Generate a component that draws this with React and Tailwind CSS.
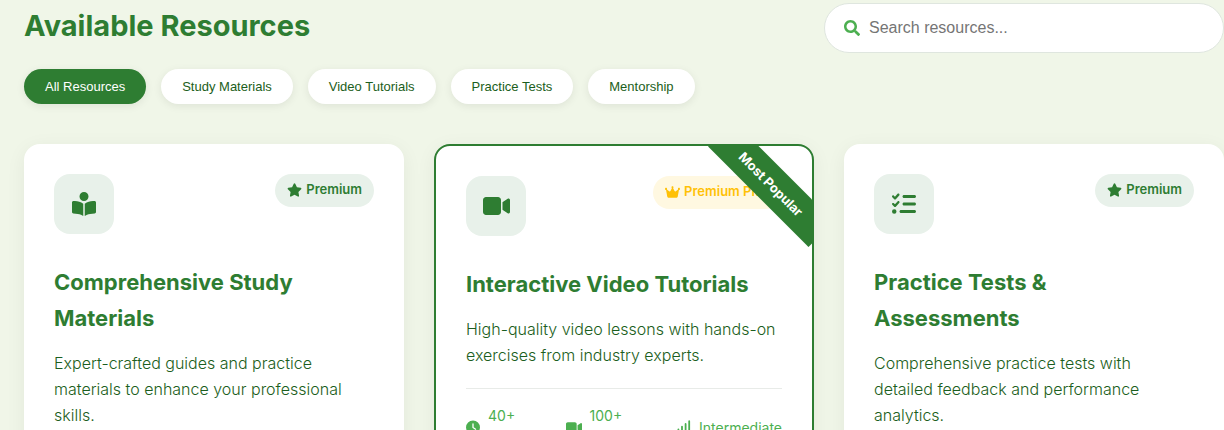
import { FaBookOpenReader, FaVideo, FaListCheck, FaStar, FaCrown, FaClock, FaSignal } from "react-icons/fa6";
import { FaSearch } from "react-icons/fa";

const filters = ["All Resources", "Study Materials", "Video Tutorials", "Practice Tests", "Mentorship"];

const resources = [
  {
    icon: FaBookOpenReader,
    iconWidth: "w-6",
    title: "Comprehensive Study Materials",
    text: "Expert-crafted guides and practice materials to enhance your professional skills.",
    badge: "Premium",
  },
  {
    icon: FaVideo,
    iconWidth: "w-[27px]",
    title: "Interactive Video Tutorials",
    text: "High-quality video lessons with hands-on exercises from industry experts.",
    badge: "Premium Plus",
    popular: true,
    stats: [
      { icon: FaClock, width: "w-[14px]", label: "40+ Hours" },
      { icon: FaVideo, width: "w-4", label: "100+ Videos" },
      { icon: FaSignal, width: "w-[18px]", label: "Intermediate" },
    ],
  },
  {
    icon: FaListCheck,
    iconWidth: "w-6",
    title: "Practice Tests & Assessments",
    text: "Comprehensive practice tests with detailed feedback and performance analytics.",
    badge: "Premium",
  },
];

function Badge({ label, gold }) {
  const Icon = gold ? FaCrown : FaStar;
  return (
    <span
      className={`flex items-center gap-1 rounded-full px-3 pt-[5px] pb-[7px] text-[13px] leading-[21px] font-semibold whitespace-nowrap ${
        gold ? "bg-[#fff8e1] text-[#ffc107]" : "bg-[#e8f1ea] text-[#2e7d32]"
      }`}
    >
      <Icon className="h-[14px] w-[15px]" aria-hidden="true" />
      {label}
    </span>
  );
}

function ResourceCard({ icon: Icon, iconWidth, title, text, badge, popular, stats }) {
  return (
    <article
      className={`relative overflow-hidden rounded-2xl bg-white p-[30px] shadow-[0_4px_20px_rgba(0,0,0,0.06)] ${
        popular ? "border-2 border-[#2e7d32]" : ""
      }`}
    >
      {popular && (
        <div className="absolute top-5 -right-[30px] w-[142px] rotate-45 bg-[#2e7d32] py-2 text-center text-[13px] leading-5 font-bold text-white">
          Most Popular
        </div>
      )}
      <div className="mb-[30px] flex items-start justify-between">
        <div className="flex size-[60px] items-center justify-center rounded-2xl bg-[#e8f1ea] text-[#2e7d32]">
          <Icon className={`h-6 ${iconWidth}`} aria-hidden="true" />
        </div>
        <Badge label={badge} gold={popular} />
      </div>
      <h3 className="mb-[14px] text-[22px] leading-9 font-bold text-[#2e7d32]">{title}</h3>
      <p className="text-[16px] leading-[26px] font-light text-[#1b5e20]">{text}</p>
      {stats && (
        <ul className="mt-5 flex items-center justify-between border-t border-[#e8ebe8] pt-[15px] text-[14px] leading-[23px] text-[#4caf50]">
          {stats.map(({ icon: StatIcon, width, label }) => (
            <li key={label} className="flex items-center gap-2">
              <StatIcon className={`h-[15px] shrink-0 ${width}`} aria-hidden="true" />
              <span className="w-min">{label}</span>
            </li>
          ))}
        </ul>
      )}
    </article>
  );
}

export default function App() {
  return (
    <main className="min-h-screen overflow-x-clip bg-[#f0f6e8] pt-[3px] pb-10 pl-6 font-['Inter',sans-serif]">
      <header className="mb-4 flex items-start justify-between">
        <h2 className="text-[29px] leading-[46px] font-bold text-[#2e7d32]">Available Resources</h2>
        <label className="flex h-[50px] w-[400px] items-center gap-[9px] rounded-full border border-[#dfe6df] bg-white px-[19px]">
          <FaSearch className="size-4 text-[#4caf50]" aria-hidden="true" />
          <input
            type="search"
            aria-label="Search resources"
            placeholder="Search resources..."
            className="min-w-0 flex-1 bg-transparent font-['Liberation_Sans',sans-serif] text-[16px] text-[#1b5e20] outline-none placeholder:text-[#757575]"
          />
        </label>
      </header>
      <nav className="mb-10 flex gap-[15px]" aria-label="Resource filters">
        {filters.map((label, i) => (
          <button
            key={label}
            type="button"
            className={`rounded-full px-[21px] py-[10px] font-['Liberation_Sans',sans-serif] text-[13px] leading-[15px] shadow-[0_2px_8px_rgba(0,0,0,0.08)] ${
              i === 0 ? "bg-[#2e7d32] text-white" : "bg-white text-[#1b5e20]"
            }`}
          >
            {label}
          </button>
        ))}
      </nav>
      <section className="grid grid-cols-3 gap-[30px]">
        {resources.map((resource) => (
          <ResourceCard key={resource.title} {...resource} />
        ))}
      </section>
    </main>
  );
}
